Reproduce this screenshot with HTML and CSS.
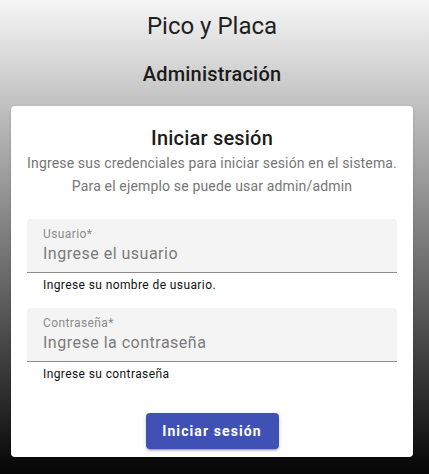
FILE: index.html
```html
<!DOCTYPE html>
<html lang="es">
<head>
<meta charset="utf-8">
<title>Pico y Placa</title>
<link rel="stylesheet" href="styles.css">
</head>
<body>
<div class="page">
  <header class="header">
    <h1 class="app-title">Pico y Placa</h1>
    <h2 class="app-subtitle">Administración</h2>
  </header>
  <main class="card">
    <h3 class="card-title">Iniciar sesión</h3>
    <p class="card-subtitle">Ingrese sus credenciales para iniciar sesión en el sistema.<br>Para el ejemplo se puede usar admin/admin</p>
    <form class="form">
      <div class="field-wrap">
        <label class="field">
          <span class="field-label">Usuario*</span>
          <input class="field-input" type="text" placeholder="Ingrese el usuario">
        </label>
        <div class="field-hint">Ingrese su nombre de usuario.</div>
      </div>
      <div class="field-wrap second">
        <label class="field">
          <span class="field-label">Contraseña*</span>
          <input class="field-input" type="password" placeholder="Ingrese la contraseña">
        </label>
        <div class="field-hint">Ingrese su contraseña</div>
      </div>
      <div class="actions">
        <button class="btn" type="button">Iniciar sesión</button>
      </div>
    </form>
  </main>
</div>
</body>
</html>
```

FILE: styles.css
```css
html, body {
  margin: 0;
  padding: 0;
}
body {
  min-height: 100vh;
  background: linear-gradient(to bottom, #f6f6f6 0%, #050505 100%);
  font-family: Roboto, "Noto Sans", Arial, sans-serif;
  color: rgba(0, 0, 0, 0.87);
}
.page {
  padding: 10px 16px 0 11px;
  display: flex;
  flex-direction: column;
}
.header {
  display: flex;
  flex-direction: column;
  align-items: center;
}
.app-title {
  margin: 0;
  font-size: 24px;
  line-height: 32px;
  font-weight: 400;
  color: #1f1f1f;
}
.app-subtitle {
  margin: 18px 0 0;
  font-size: 20px;
  line-height: 28px;
  font-weight: 500;
  letter-spacing: 0.2px;
  color: #1a1a1a;
}
.card {
  margin-top: 18px;
  background: #fff;
  border-radius: 4px;
  box-shadow: 0 2px 1px -1px rgba(0,0,0,.2), 0 1px 1px 0 rgba(0,0,0,.14), 0 1px 3px 0 rgba(0,0,0,.12);
  padding: 18px 16px 8px;
  display: flex;
  flex-direction: column;
}
.card-title {
  margin: 0;
  text-align: center;
  font-size: 20px;
  line-height: 28px;
  font-weight: 500;
  letter-spacing: 0.2px;
  color: #1c1c1c;
}
.card-subtitle {
  margin: 0;
  text-align: center;
  font-size: 14px;
  line-height: 23px;
  letter-spacing: 0.16px;
  color: #767676;
}
.form {
  margin-top: 21px;
  display: flex;
  flex-direction: column;
}
.field-wrap.second {
  margin-top: 15px;
}
.field {
  display: flex;
  flex-direction: column;
  background: #f4f4f4;
  border-radius: 4px 4px 0 0;
  border-bottom: 1px solid #8c8c8c;
  padding: 7px 16px 6px;
}
.field-label {
  font-size: 12px;
  line-height: 16px;
  letter-spacing: 0.4px;
  color: #8a8a8a;
}
.field-input {
  border: 0;
  outline: 0;
  background: transparent;
  padding: 0;
  margin: 0;
  font-family: inherit;
  font-size: 16px;
  line-height: 24px;
  height: 24px;
  letter-spacing: 0.5px;
  color: #222;
}
.field-input::placeholder {
  color: #7b7b7b;
}
.field-hint {
  margin-top: 4px;
  padding: 0 16px;
  font-size: 12px;
  line-height: 16px;
  letter-spacing: 0.4px;
  color: #111;
}
.actions {
  margin-top: 31px;
  display: flex;
  justify-content: center;
}
.btn {
  width: 133px;
  height: 36px;
  border: 0;
  border-radius: 4px;
  background: #3f51b5;
  color: #fff;
  font-family: inherit;
  font-size: 14px;
  font-weight: 700;
  letter-spacing: 1.1px;
  box-shadow: 0 3px 1px -2px rgba(0,0,0,.2), 0 2px 2px 0 rgba(0,0,0,.14), 0 1px 5px 0 rgba(0,0,0,.12);
  cursor: pointer;
}
```
